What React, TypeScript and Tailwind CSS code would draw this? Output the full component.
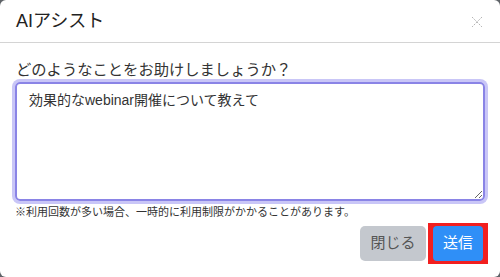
import React, { useState } from "react";

export default function App() {
  const [text, setText] = useState("効果的なwebinar開催について教えて");

  return (
    <div
      className="w-[500px] h-[277px] bg-[#5f6368] overflow-hidden"
      style={{ fontFamily: '"Liberation Sans", "Noto Sans CJK JP", sans-serif' }}
    >
      <div className="w-full h-full bg-white rounded-[6px] flex flex-col">
        {/* Header */}
        <div className="h-[43px] flex items-center justify-between pl-[16px] pr-[16px] border-b border-[#d4d4d4]">
          <h2 className="text-[18px] text-[#222] leading-none">AIアシスト</h2>
          <button className="text-[#b5b5b5] w-[14px] h-[14px] flex items-center justify-center mt-[2px]">
            <svg width="12" height="12" viewBox="0 0 12 12" fill="none" stroke="currentColor" strokeWidth="1" strokeDasharray="2 1.2">
              <path d="M1 1 L11 11 M11 1 L1 11" />
            </svg>
          </button>
        </div>

        {/* Body */}
        <div className="px-[15px] pt-[18px] flex flex-col">
          <label className="text-[15.3px] text-[#333] leading-[18px] pl-[1px] mb-[3px]">
            どのようなことをお助けしましょうか？
          </label>
          <textarea
            value={text}
            onChange={(e) => setText(e.target.value)}
            className="w-[470px] h-[119px] border-2 border-[#8a84e6] rounded-[5px] ring-[3px] ring-[#c9c6f7] px-[12px] pt-[6px] pb-[6px] text-[14px] text-[#333] leading-[20px] outline-none resize-y"
            style={{ fontFamily: '"Liberation Sans", "Noto Sans CJK JP", sans-serif' }}
          />
          <p className="text-[11px] text-[#333] leading-[14px] mt-[4px]">
            ※利用回数が多い場合、一時的に利用制限がかかることがあります。
          </p>
        </div>

        {/* Footer */}
        <div className="flex justify-end items-center gap-[2px] pr-[12px] mt-[4px]">
          <button className="w-[66px] h-[35px] rounded-[5px] bg-[#c4c8ce] text-[#555] text-[15px]">
            閉じる
          </button>
          <div className="border-[3px] border-[#f21f1f] px-[2px] bg-[#f21f1f]">
            <button className="w-[50px] h-[35px] rounded-[4px] bg-[#2f8ff7] text-white text-[15px] block">
              送信
            </button>
          </div>
        </div>
      </div>
    </div>
  );
}
